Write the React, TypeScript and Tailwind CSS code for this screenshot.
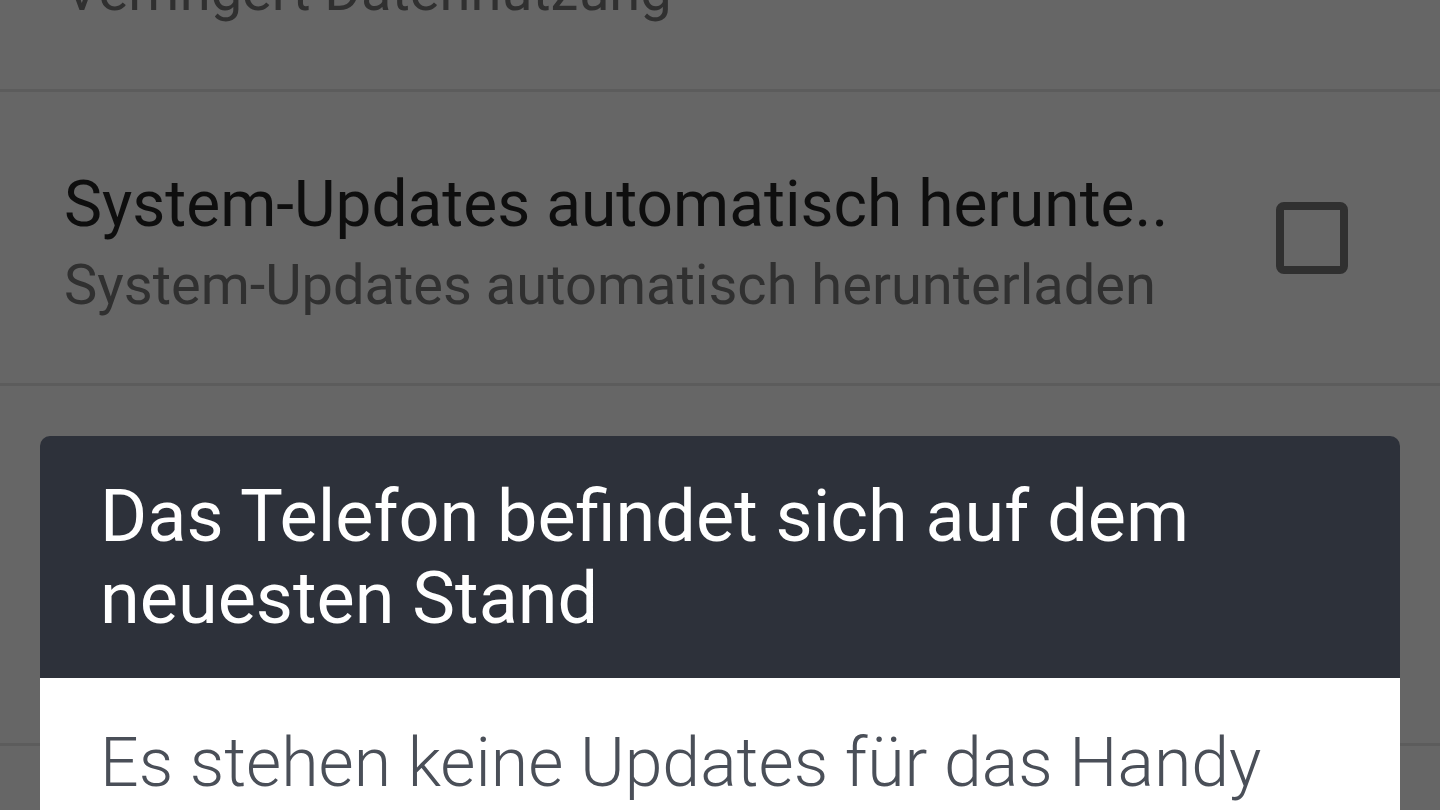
import { type ReactNode } from "react";

const Divider = () => <div className="h-[3px] bg-[#5c5c5c]" />;

const Checkbox = () => (
  <div className="h-[72px] w-[72px] shrink-0 rounded-[8px] border-[8px] border-[#303030]" />
);

type RowProps = {
  title: string;
  summary: string;
  action?: ReactNode;
};

const SettingRow = ({ title, summary, action }: RowProps) => (
  <div className="flex h-[291px] items-center pl-[64px] pr-[92px]">
    <div className="mt-[19px] flex min-w-0 flex-1 flex-col">
      <span className="whitespace-nowrap text-[64px] leading-[76px] text-[#0e0e0e]">
        {title}
      </span>
      <span className="whitespace-nowrap text-[56px] leading-[85px] text-[#303030]">
        {summary}
      </span>
    </div>
    {action}
  </div>
);

export default function App() {
  return (
    <div className="relative h-[810px] w-full overflow-hidden bg-[#666666] font-['Roboto',sans-serif]">
      {/* settings list, dimmed behind the dialog */}
      <div className="flex flex-col">
        <div className="h-[89px] pl-[64px]">
          <p className="-mt-[41px] whitespace-nowrap text-[56px] leading-[64px] text-[#303030]">
            Verringert Datennutzung
          </p>
        </div>
        <Divider />
        <SettingRow
          title="System-Updates automatisch herunte.."
          summary="System-Updates automatisch herunterladen"
          action={<Checkbox />}
        />
        <Divider />
        <div className="h-[357px]" />
        <Divider />
        <div className="h-[300px]" />
      </div>

      {/* update status dialog */}
      <div className="absolute left-[40px] right-[40px] top-[436px] overflow-hidden rounded-t-[10px]">
        <div className="bg-[#2d313a] px-[60px] pb-[38px] pt-[40px]">
          <h2 className="text-[72px] leading-[82px] text-white">
            Das Telefon befindet sich auf dem neuesten Stand
          </h2>
        </div>
        <div className="h-[400px] bg-white px-[60px] pt-[44px]">
          <p className="text-[68px] font-light leading-[82px] text-[#4a4f58]">
            Es stehen keine Updates für das Handy
          </p>
        </div>
      </div>
    </div>
  );
}
